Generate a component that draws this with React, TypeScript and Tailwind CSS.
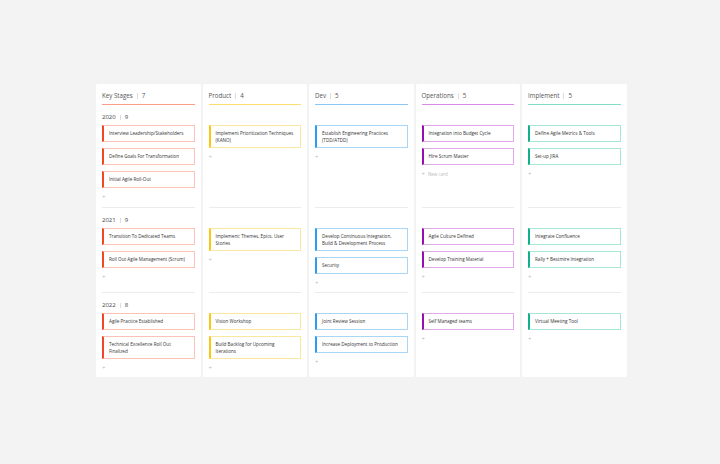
const cols = [
  { t: "Key Stages", n: 7, line: "bg-[#fa9c86]", bd: "border-[#fbc2b5]", acc: "border-l-[#f24726]",
    rows: [["Interview Leadership/Stakeholders", "Define Goals For Transformation", "Initial Agile Roll-Out"], ["Transition To Dedicated Teams", "Roll Out Agile Management (Scrum)"], ["Agile Practice Established", "Technical Excellence Roll Out Finalized"]] },
  { t: "Product", n: 4, line: "bg-[#fbdf6e]", bd: "border-[#fbe8a0]", acc: "border-l-[#fac710]",
    rows: [["Implement Prioritization Techniques (KANO)"], ["Implement: Themes, Epics, User Stories"], ["Vision Workshop", "Build Backlog for Upcoming Iterations"]] },
  { t: "Dev", n: 5, line: "bg-[#8cc8f5]", bd: "border-[#a9d5f7]", acc: "border-l-[#2d9bf0]",
    rows: [["Establish Engineering Practices (TDD/ATDD)"], ["Develop Continuous Integration, Build & Development Process", "Security"], ["Joint Review Session", "Increase Deployment to Production"]] },
  { t: "Operations", n: 5, line: "bg-[#d98ae6]", bd: "border-[#e2aaeb]", acc: "border-l-[#9510ac]",
    rows: [["Integration into Budget Cycle", "Hire Scrum Master"], ["Agile Culture Defined", "Develop Training Material"], ["Self Managed teams"]] },
  { t: "Implement", n: 5, line: "bg-[#82dcc6]", bd: "border-[#a6e6d6]", acc: "border-l-[#12b08a]",
    rows: [["Define Agile Metrics & Tools", "Set-up JIRA"], ["Integrate Confluence", "Rally + Bestmire Integration"], ["Virtual Meeting Tool"]] },
];
const years = [["2020", 9], ["2021", 9], ["2022", 8]];
const heights = ["h-[103px]", "h-[85px]", "h-[84px]"];

export default function App() {
  return (
    <div className="w-[720px] h-[464px] bg-[#f3f3f3] pt-[84px] pl-[96px]" style={{ fontFamily: "'Open Sans', sans-serif" }}>
      <div className="flex gap-[2px]">
        {cols.map((c, ci) => (
          <div key={ci} className="w-[104.5px] bg-white rounded-[2px] px-[6px] flex flex-col">
            <div className="h-[20px] flex items-end pb-[5px] text-[6.2px] text-[#555] leading-none">
              {c.t}<span className="mx-[4px] w-px h-[6px] bg-[#ddd]" />{c.n}
            </div>
            <div className={`h-[1px] ${c.line}`} />
            {c.rows.map((r, ri) => (
              <div key={ri} className={`${heights[ri]} flex flex-col ${ri < 2 ? "border-b border-[#ececec]" : ""}`}>
                <div className="h-[20px] flex items-end pb-[5px] text-[6px] text-[#444] leading-none">
                  {ci === 0 && (<>{years[ri][0]}<span className="mx-[4px] w-px h-[5px] bg-[#ddd]" />{years[ri][1]}</>)}
                </div>
                <div className="flex flex-col gap-[6px]">
                  {r.map((card, k) => (
                    <div key={k} className={`border ${c.bd} border-l-2 ${c.acc} min-h-[17px] px-[5px] py-[4px] text-[4.6px] text-[#333] leading-[6.5px] flex items-center`}>
                      {card}
                    </div>
                  ))}
                </div>
                <div className="mt-[6px] text-[6px] text-[#bbb] leading-none flex items-center gap-[3px]">
                  +{ci === 3 && ri === 0 && <span className="text-[4.5px]">New card</span>}
                </div>
              </div>
            ))}
          </div>
        ))}
      </div>
    </div>
  );
}
